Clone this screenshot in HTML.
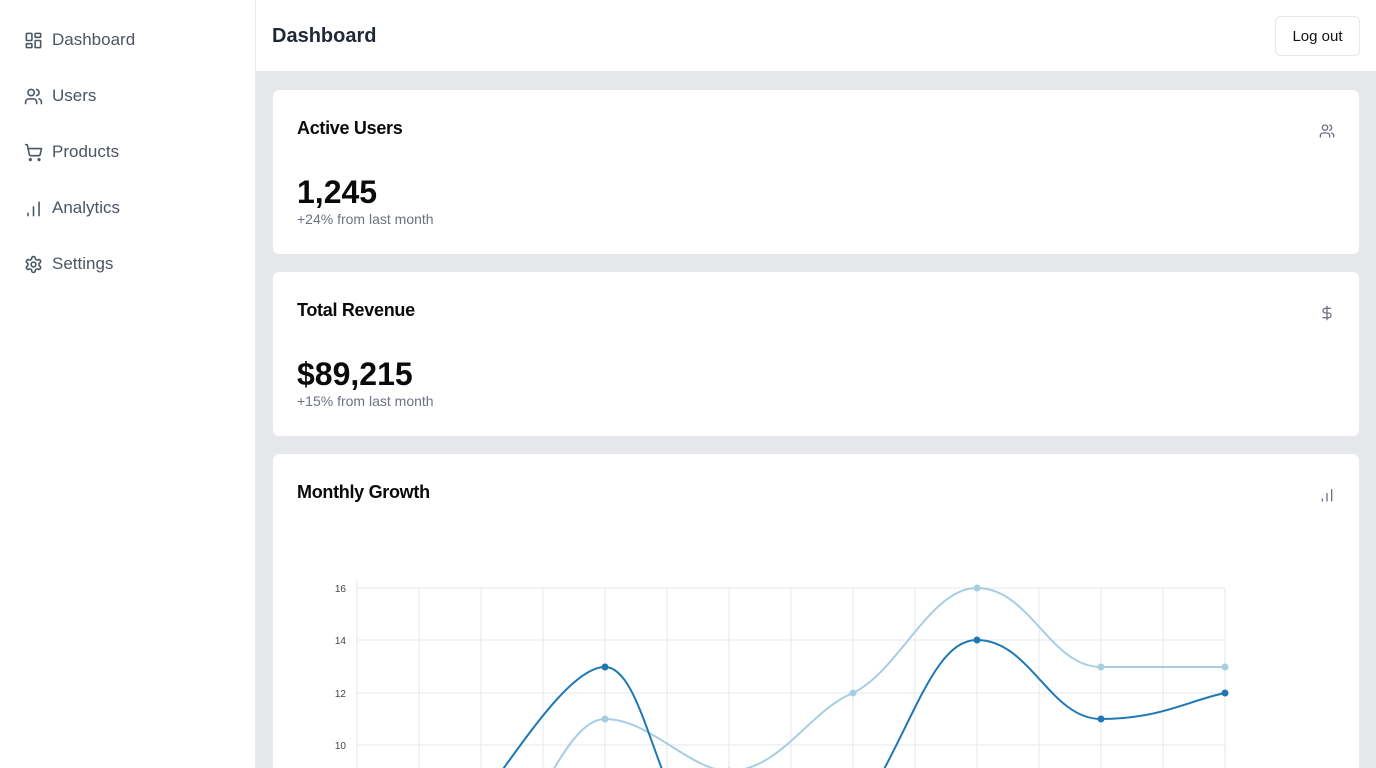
<!DOCTYPE html>
<html><head><meta charset="utf-8"><style>
*{box-sizing:border-box;margin:0;padding:0}
html,body{width:1376px;height:768px;overflow:hidden}
body{font-family:"Liberation Sans",sans-serif;background:#e5e7eb;position:relative}
.side{position:absolute;left:0;top:0;width:256px;height:768px;background:#fff;border-right:1px solid #e5e7eb}
.nav{position:absolute;left:24px;display:flex;align-items:center;gap:9px;font-size:17px;color:#4b5563}
.nav svg{width:19px;height:19px;fill:none;stroke:#4b5563;stroke-width:2;stroke-linecap:round;stroke-linejoin:round}
.top{position:absolute;left:256px;top:0;right:0;height:72px;background:#fff;border-bottom:1px solid #e5e7eb}
.top h1{position:absolute;left:16px;top:25px;font-size:20px;font-weight:bold;color:#1f2937}
.btn{position:absolute;right:16px;top:16px;width:85px;height:40px;border:1px solid #e5e7eb;border-radius:6px;font-size:15px;color:#111;display:flex;align-items:center;justify-content:center}
.card{position:absolute;left:273px;width:1086px;background:#fff;border-radius:6px}
.card h2{position:absolute;left:24px;top:28px;font-size:18px;font-weight:bold;color:#0a0a0a;letter-spacing:-0.3px}
.card .v{position:absolute;left:24px;top:84px;font-size:32px;font-weight:bold;color:#0a0a0a}
.card .s{position:absolute;left:24px;top:121px;font-size:14px;color:#6b7280}
.ic{position:absolute;right:24px;top:33px;width:16px;height:16px;fill:none;stroke:#6b7280;stroke-width:2;stroke-linecap:round;stroke-linejoin:round}
</style></head><body>
<div class="side">
<div class="nav" style="top:30px"><svg viewBox="0 0 24 24"><rect x="3" y="3" width="7" height="9" rx="1"/><rect x="14" y="3" width="7" height="5" rx="1"/><rect x="14" y="12" width="7" height="9" rx="1"/><rect x="3" y="16" width="7" height="5" rx="1"/></svg>Dashboard</div>
<div class="nav" style="top:86px"><svg viewBox="0 0 24 24"><path d="M16 21v-2a4 4 0 0 0-4-4H6a4 4 0 0 0-4 4v2"/><circle cx="9" cy="7" r="4"/><path d="M22 21v-2a4 4 0 0 0-3-3.87M16 3.13a4 4 0 0 1 0 7.75"/></svg>Users</div>
<div class="nav" style="top:142px"><svg viewBox="0 0 24 24"><circle cx="8" cy="21" r="1"/><circle cx="19" cy="21" r="1"/><path d="M2.05 2.05h2l2.66 12.42a2 2 0 0 0 2 1.58h9.78a2 2 0 0 0 1.95-1.57l1.65-7.43H5.12"/></svg>Products</div>
<div class="nav" style="top:198px"><svg viewBox="0 0 24 24"><path d="M5 21v-3M12 21V10M19 21V4"/></svg>Analytics</div>
<div class="nav" style="top:254px"><svg viewBox="0 0 24 24"><path d="M12.22 2h-.44a2 2 0 0 0-2 2v.18a2 2 0 0 1-1 1.73l-.43.25a2 2 0 0 1-2 0l-.15-.08a2 2 0 0 0-2.73.73l-.22.38a2 2 0 0 0 .73 2.730l.15.1a2 2 0 0 1 1 1.72v.51a2 2 0 0 1-1 1.74l-.15.09a2 2 0 0 0-.73 2.73l.22.38a2 2 0 0 0 2.73.73l.15-.08a2 2 0 0 1 2 0l.43.25a2 2 0 0 1 1 1.73V20a2 2 0 0 0 2 2h.44a2 2 0 0 0 2-2v-.18a2 2 0 0 1 1-1.73l.43-.25a2 2 0 0 1 2 0l.15.08a2 2 0 0 0 2.73-.73l.22-.39a2 2 0 0 0-.73-2.73l-.15-.08a2 2 0 0 1-1-1.74v-.5a2 2 0 0 1 1-1.74l.15-.09a2 2 0 0 0 .73-2.73l-.22-.38a2 2 0 0 0-2.73-.73l-.15.08a2 2 0 0 1-2 0l-.43-.25a2 2 0 0 1-1-1.73V4a2 2 0 0 0-2-2z"/><circle cx="12" cy="12" r="3"/></svg>Settings</div>
</div>
<div class="top"><h1>Dashboard</h1><div class="btn">Log out</div></div>
<div class="card" style="top:90px;height:164px"><h2>Active Users</h2><svg class="ic" viewBox="0 0 24 24"><path d="M16 21v-2a4 4 0 0 0-4-4H6a4 4 0 0 0-4 4v2"/><circle cx="9" cy="7" r="4"/><path d="M22 21v-2a4 4 0 0 0-3-3.87M16 3.13a4 4 0 0 1 0 7.75"/></svg><div class="v">1,245</div><div class="s">+24% from last month</div></div>
<div class="card" style="top:272px;height:164px"><h2>Total Revenue</h2><svg class="ic" viewBox="0 0 24 24"><path d="M12 2v20M17 5H9.5a3.5 3.5 0 0 0 0 7h5a3.5 3.5 0 0 1 0 7H6"/></svg><div class="v">$89,215</div><div class="s">+15% from last month</div></div>
<div class="card" style="top:454px;height:314px;border-radius:6px 6px 0 0"><h2>Monthly Growth</h2><svg class="ic" viewBox="0 0 24 24"><path d="M5 21v-3M12 21V10M19 21V4"/></svg></div>
<svg style="position:absolute;left:0;top:0" width="1376" height="768">
<g stroke="#e5e7eb" stroke-width="1">
<line x1="357" y1="588" x2="1225" y2="588"/><line x1="357" y1="640" x2="1225" y2="640"/><line x1="357" y1="693" x2="1225" y2="693"/><line x1="357" y1="745" x2="1225" y2="745"/>
<line x1="357" y1="580" x2="357" y2="768"/><line x1="419" y1="588" x2="419" y2="768"/><line x1="481" y1="588" x2="481" y2="768"/><line x1="543" y1="588" x2="543" y2="768"/><line x1="605" y1="588" x2="605" y2="768"/><line x1="667" y1="588" x2="667" y2="768"/><line x1="729" y1="588" x2="729" y2="768"/><line x1="791" y1="588" x2="791" y2="768"/><line x1="853" y1="588" x2="853" y2="768"/><line x1="915" y1="588" x2="915" y2="768"/><line x1="977" y1="588" x2="977" y2="768"/><line x1="1039" y1="588" x2="1039" y2="768"/><line x1="1101" y1="588" x2="1101" y2="768"/><line x1="1163" y1="588" x2="1163" y2="768"/><line x1="1225" y1="588" x2="1225" y2="768"/>
</g>
<g font-family="Liberation Sans" font-size="10" fill="#444" text-anchor="end"><text x="346" y="592">16</text><text x="346" y="644">14</text><text x="346" y="697">12</text><text x="346" y="749">10</text></g>
<path fill="none" stroke="#a6cee3" stroke-width="2" d="M481 850 C530 850 560 719 605 719 C650 719 690 771 729 771 C780 771 810 710 853 693 C900 670 930 588 977 588 C1030 588 1050 667 1101 667 L1225 667"/>
<path fill="none" stroke="#1f78b4" stroke-width="2" d="M440 850 C490 800 560 667 605 667 C650 667 660 850 729 850 C800 850 840 840 853 820 C910 740 930 640 977 640 C1030 640 1050 719 1101 719 C1160 719 1190 700 1225 693"/>
<g fill="#a6cee3"><circle cx="605" cy="719" r="3.5"/><circle cx="729" cy="771" r="3.5"/><circle cx="853" cy="693" r="3.5"/><circle cx="977" cy="588" r="3.5"/><circle cx="1101" cy="667" r="3.5"/><circle cx="1225" cy="667" r="3.5"/></g>
<g fill="#1f78b4"><circle cx="605" cy="667" r="3.5"/><circle cx="977" cy="640" r="3.5"/><circle cx="1101" cy="719" r="3.5"/><circle cx="1225" cy="693" r="3.5"/></g>
</svg>
</body></html>
